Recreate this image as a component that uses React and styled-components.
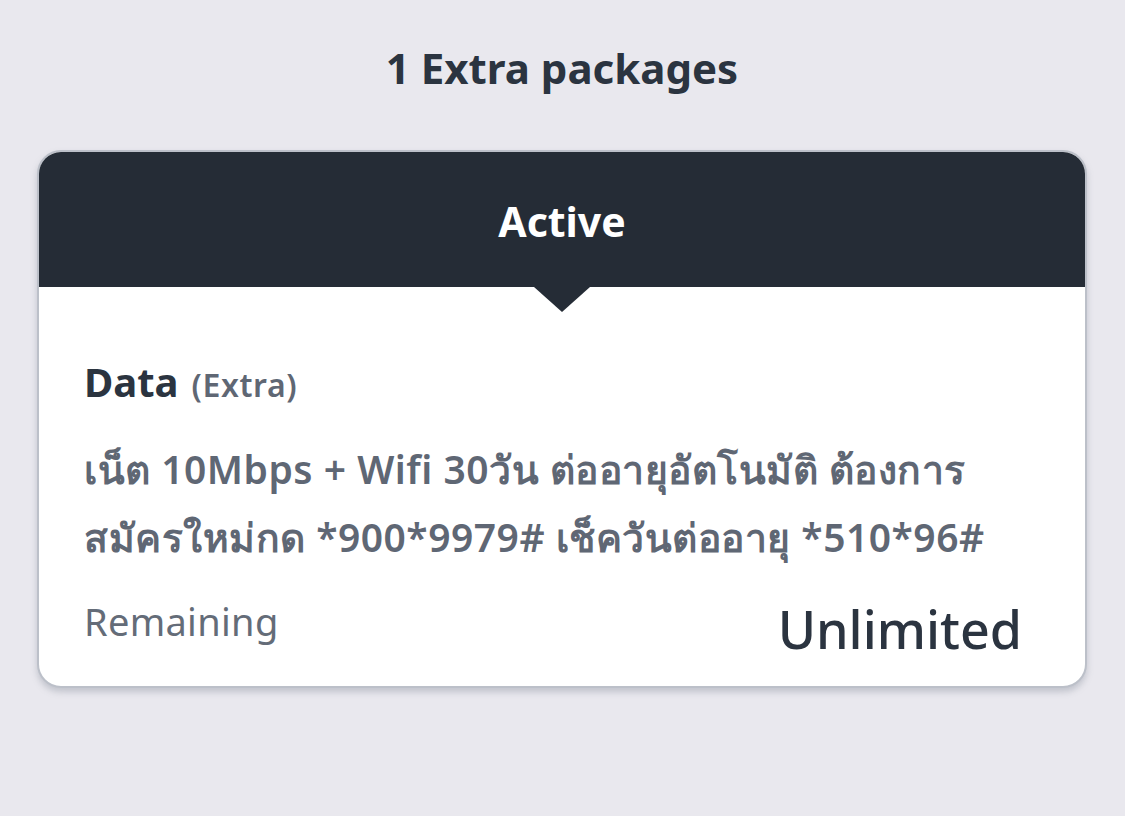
import React from "react";
import styled, { createGlobalStyle } from "styled-components";

const Global = createGlobalStyle`
  html, body { margin: 0; padding: 0; background: #e9e8ee; }
  body { font-family: "Noto Sans", "Open Sans", "DejaVu Sans", sans-serif; }
`;

const Page = styled.div`
  width: 1125px;
  height: 816px;
  box-sizing: border-box;
  padding: 38px 38px 0 37px;
  display: flex;
  flex-direction: column;
  align-items: stretch;
`;

const Title = styled.h1`
  margin: 0 0 52px 0;
  text-align: center;
  font-size: 42px;
  line-height: 60px;
  font-weight: 700;
  color: #2b3440;
`;

const Card = styled.section`
  position: relative;
  background: #ffffff;
  border: 2px solid #bcc0c9;
  border-radius: 24px;
  box-shadow: 0 4px 6px rgba(120, 128, 142, 0.35);
`;

const Header = styled.div`
  position: relative;
  height: 135px;
  background: #252c36;
  border-radius: 22px 22px 0 0;
  display: flex;
  align-items: center;
  justify-content: center;
  color: #ffffff;
  font-size: 41px;
  font-weight: 700;
  padding-top: 2px;
  box-sizing: border-box;

  &::after {
    content: "";
    position: absolute;
    left: 50%;
    bottom: -25px;
    transform: translateX(-50%);
    border-left: 28px solid transparent;
    border-right: 28px solid transparent;
    border-top: 25px solid #252c36;
  }
`;

const Body = styled.div`
  padding: 70px 63px 27px 45px;
`;

const NameRow = styled.div`
  display: flex;
  align-items: baseline;
  gap: 13px;
  line-height: 50px;
`;

const Name = styled.span`
  font-size: 40px;
  font-weight: 700;
  color: #2b3440;
`;

const Tag = styled.span`
  font-size: 32px;
  font-weight: 600;
  color: #5f6774;
  letter-spacing: 0.6px;
`;

const Desc = styled.p`
  margin: 25px 0 0 0;
  font-size: 39px;
  line-height: 68px;
  font-weight: 600;
  color: #5f6774;
  letter-spacing: 0.5px;
  white-space: nowrap;
`;

const Footer = styled.div`
  display: flex;
  justify-content: space-between;
  align-items: flex-start;
  margin-top: 28px;
`;

const Label = styled.span`
  font-size: 38px;
  line-height: 44px;
  font-weight: 400;
  color: #646c78;
  letter-spacing: 0.3px;
`;

const Value = styled.span`
  font-size: 52px;
  line-height: 60px;
  font-weight: 500;
  color: #2b3440;
`;

export default function App() {
  return (
    <Page>
      <Global />
      <Title>1 Extra packages</Title>
      <Card>
        <Header>Active</Header>
        <Body>
          <NameRow>
            <Name>Data</Name>
            <Tag>(Extra)</Tag>
          </NameRow>
          <Desc>
            เน็ต 10Mbps + Wifi 30วัน ต่ออายุอัตโนมัติ ต้องการ
            <br />
            สมัครใหม่กด *900*9979# เช็ควันต่ออายุ *510*96#
          </Desc>
          <Footer>
            <Label>Remaining</Label>
            <Value>Unlimited</Value>
          </Footer>
        </Body>
      </Card>
    </Page>
  );
}
